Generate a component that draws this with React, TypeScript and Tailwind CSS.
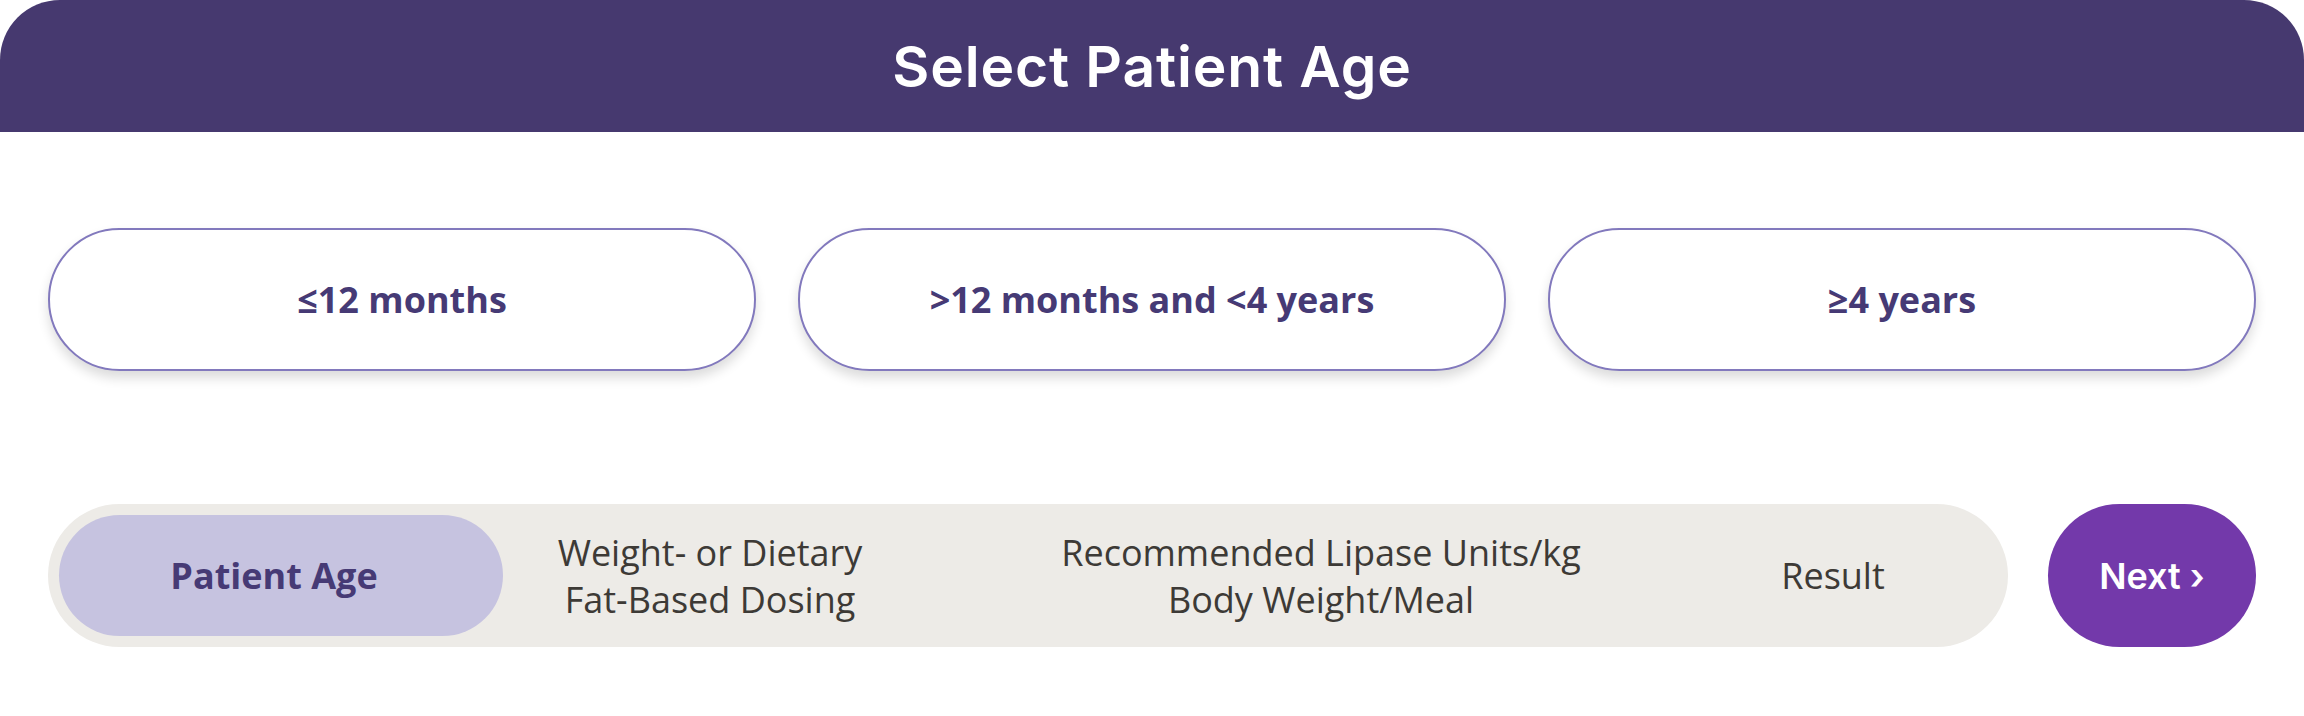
export default function App() {
  const ages = ['≤12 months', '>12 months and <4 years', '≥4 years'];

  return (
    <div className="w-full h-[716px] bg-white font-['Open_Sans',sans-serif]">
      {/* Header */}
      <div className="h-[132px] bg-[#46396f] rounded-t-[60px] flex items-center justify-center">
        <h1 className="text-white text-[57px] font-semibold tracking-[0.015em] font-['Inter',sans-serif] leading-none">
          Select Patient Age
        </h1>
      </div>

      {/* Age options */}
      <div className="px-12 pt-24 grid grid-cols-3 gap-[42px]">
        {ages.map((age) => (
          <button
            key={age}
            className="h-[143px] rounded-full bg-white border-2 border-[#8279bd] shadow-[0_7px_12px_rgba(0,0,0,0.14)] text-[#463a75] text-[36px] font-bold"
          >
            {age}
          </button>
        ))}
      </div>

      {/* Stepper + next */}
      <div className="px-12 mt-[133px] flex gap-10">
        <div className="flex-1 h-[143px] rounded-full bg-[#edebe7] p-[11px] flex items-center">
          <div className="w-[444px] h-full rounded-full bg-[#c6c3e0] flex items-center justify-center pr-[14px] text-[#463a75] text-[36px] font-bold">
            Patient Age
          </div>
          <div className="w-[414px] text-center text-[#3d3a36] text-[36px] leading-[47px]">
            Weight- or Dietary
            <br />
            Fat-Based Dosing
          </div>
          <div className="w-[808px] text-center text-[#3d3a36] text-[36px] leading-[47px]">
            Recommended Lipase Units/kg
            <br />
            Body Weight/Meal
          </div>
          <div className="w-[216px] text-center text-[#3d3a36] text-[36px] leading-[47px]">
            Result
          </div>
        </div>
        <button className="w-[208px] h-[143px] rounded-full bg-[#7339aa] text-white text-[36px] font-semibold font-['Inter',sans-serif]">
          Next ›
        </button>
      </div>
    </div>
  );
}
